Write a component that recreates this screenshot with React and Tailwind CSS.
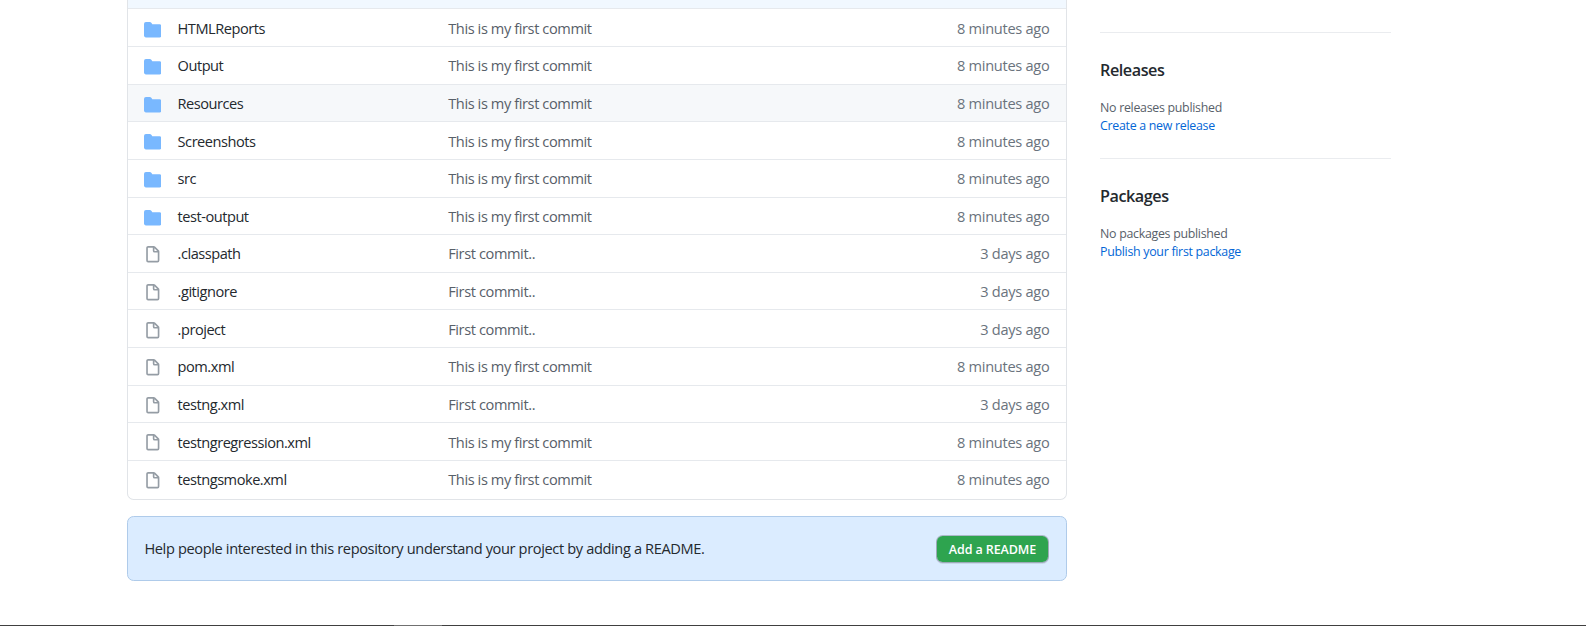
const COMMIT = 'This is my first commit'
const RECENT = '8 minutes ago'
const FIRST = 'First commit..'
const OLDER = '3 days ago'

const entries = [
  { name: 'HTMLReports', folder: true, message: COMMIT, time: RECENT },
  { name: 'Output', folder: true, message: COMMIT, time: RECENT },
  { name: 'Resources', folder: true, message: COMMIT, time: RECENT, active: true },
  { name: 'Screenshots', folder: true, message: COMMIT, time: RECENT },
  { name: 'src', folder: true, message: COMMIT, time: RECENT },
  { name: 'test-output', folder: true, message: COMMIT, time: RECENT },
  { name: '.classpath', message: FIRST, time: OLDER },
  { name: '.gitignore', message: FIRST, time: OLDER },
  { name: '.project', message: FIRST, time: OLDER },
  { name: 'pom.xml', message: COMMIT, time: RECENT },
  { name: 'testng.xml', message: FIRST, time: OLDER },
  { name: 'testngregression.xml', message: COMMIT, time: RECENT },
  { name: 'testngsmoke.xml', message: COMMIT, time: RECENT },
]

function FolderIcon() {
  return (
    <svg viewBox="0 0 16 16" className="size-[17.6px] fill-[#79b8ff]" aria-hidden="true">
      <path d="M1.75 1A1.75 1.75 0 000 2.75v10.5C0 14.216.784 15 1.75 15h12.5A1.75 1.75 0 0016 13.25v-8.5A1.75 1.75 0 0014.25 3h-6.5a.25.25 0 01-.2-.1l-.9-1.2c-.33-.44-.85-.7-1.4-.7h-3.5z" />
    </svg>
  )
}

function FileIcon() {
  return (
    <svg viewBox="0 0 16 16" className="size-[17.6px] fill-[#959da5]" aria-hidden="true">
      <path
        fillRule="evenodd"
        d="M3.75 1.5a.25.25 0 00-.25.25v11.5c0 .138.112.25.25.25h8.5a.25.25 0 00.25-.25V6H9.75A1.75 1.75 0 018 4.25V1.5H3.75zm5.75.56v2.19c0 .138.112.25.25.25h2.19L9.5 2.06zM2 1.75C2 .784 2.784 0 3.75 0h5.086c.464 0 .909.184 1.237.513l3.414 3.414c.329.328.513.773.513 1.237v8.086A1.75 1.75 0 0112.25 15h-8.5A1.75 1.75 0 012 13.25V1.75z"
      />
    </svg>
  )
}

function Row({ entry }) {
  return (
    <div
      className={`flex h-[37.64px] shrink-0 items-center border-t border-[#e6e9ed] pr-[16.6px] pl-[15.6px] text-[14.6px] leading-5 last:h-[38.8px] last:pb-[1.4px] ${entry.active ? 'bg-[#f6f8fa]' : ''}`}
    >
      <div className="w-[34px] shrink-0 pt-[3.4px]">{entry.folder ? <FolderIcon /> : <FileIcon />}</div>
      <div className="w-[270.6px] shrink-0 tracking-[-0.48px] text-[#24292e]">{entry.name}</div>
      <div className="flex-1 tracking-[-0.4px] text-[#586069]">{entry.message}</div>
      <div className="tracking-[-0.29px] text-[#6a737d]">{entry.time}</div>
    </div>
  )
}

function SideSection({ title, note, action }) {
  return (
    <section className="h-[126px] border-t border-[#eaecef] pt-[25px]">
      <h2 className="text-[16.2px] leading-6 font-semibold tracking-[-0.45px] text-[#24292e]">{title}</h2>
      <p className="mt-[17px] text-[12.4px] leading-[18px] tracking-[-0.29px] text-[#586069]">{note}</p>
      <a href="#" className="block text-[12.4px] leading-[18px] tracking-[-0.29px] text-[#0366d6]">
        {action}
      </a>
    </section>
  )
}

export default function App() {
  return (
    <div className="flex h-[626px] flex-col overflow-hidden bg-white font-['Open_Sans','Noto_Sans',sans-serif]">
      <div className="flex flex-1 pl-[127px]">
        <main className="w-[940px]">
          <div className="flex h-[500px] flex-col overflow-hidden rounded-b-[6.6px] border-x border-b border-[#e1e4e8]">
            <div className="-mx-px h-[8.42px] shrink-0 border-x border-[#c8e1ff] bg-[#f1f8ff]" />
            <div className="flex flex-col">
              {entries.map((entry) => (
                <Row key={entry.name} entry={entry} />
              ))}
            </div>
          </div>
          <div className="mt-4 flex h-[65px] items-center justify-between rounded-[6.6px] border border-[#afcbea] bg-[#dbecff] pr-[17px] pl-[16.4px]">
            <p className="text-[14.6px] tracking-[-0.365px] text-[#24292e]">
              Help people interested in this repository understand your project by adding a README.
            </p>
            <button className="h-7 w-[113px] rounded-[6.6px] border border-[#1b1f23]/25 bg-[#2ea44f] bg-clip-padding pt-[3px] text-[12.5px] leading-none font-semibold tracking-[-0.1px] text-white shadow-[0_1px_0_rgba(27,31,35,0.1)]">
              Add a README
            </button>
          </div>
        </main>
        <aside className="ml-[33px] w-[291px] pt-8">
          <SideSection title="Releases" note="No releases published" action="Create a new release" />
          <SideSection title="Packages" note="No packages published" action="Publish your first package" />
        </aside>
      </div>
      <div className="h-px bg-[#404040] pl-[394px]">
        <div className="h-px w-12 bg-[#707070]" />
      </div>
    </div>
  )
}
